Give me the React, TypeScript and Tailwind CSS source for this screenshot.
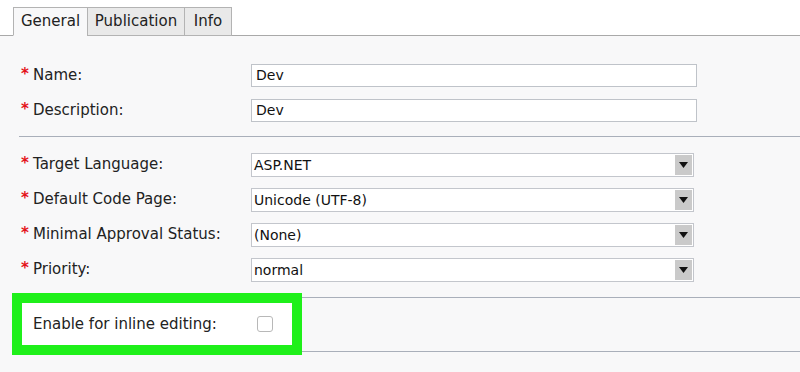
import React from 'react';

const font = "font-['DejaVu_Sans','Verdana',sans-serif]";

function Label({ text, required }: { text: string; required?: boolean }) {
  return (
    <div className="w-[232px] flex items-center pl-[2px] text-[15px] text-[#222]">
      <span className="w-[12px] text-[15px] font-bold text-[#e4121a] leading-none -mt-[2px]">
        {required ? '*' : ''}
      </span>
      <span>{text}</span>
    </div>
  );
}

function TextInput({ value }: { value: string }) {
  return (
    <div className="w-[446px] h-[23px] bg-white border border-[#bfc3c9] flex items-center pl-[4px] text-[14px] text-[#111]">
      {value}
    </div>
  );
}

function Select({ value }: { value: string }) {
  return (
    <div className="w-[443px] h-[24px] bg-white border border-[#c3c6cc] flex items-stretch text-[14px] text-[#111]">
      <div className="flex-1 flex items-center pl-[2px] pt-[2px]">{value}</div>
      <div className="w-[17px] bg-[#cacaca] flex items-center justify-center my-[1px] mr-[1px]">
        <svg width="9" height="6" viewBox="0 0 9 6">
          <path d="M0 0 L9 0 L4.5 6 Z" fill="#111" />
        </svg>
      </div>
    </div>
  );
}

function Row({ label, required, children }: { label: string; required?: boolean; children: React.ReactNode }) {
  return (
    <div className="h-[35px] flex items-center">
      <Label text={label} required={required} />
      {children}
    </div>
  );
}

export default function App() {
  const tabs = [
    { name: 'General', w: 'w-[75px]', active: true },
    { name: 'Publication', w: 'w-[98px]', active: false },
    { name: 'Info', w: 'w-[48px]', active: false },
  ];

  return (
    <div className={`w-[800px] h-[372px] bg-[#f8f8f9] overflow-hidden ${font}`}>
      {/* tab strip */}
      <div className="h-[36px] bg-white border-b border-[#a9a9a9] flex items-end pl-[13px]">
        {tabs.map((t, i) => (
          <div
            key={t.name}
            className={`${t.w} h-[29px] -mb-px flex items-center justify-center text-[15px] text-[#222] border border-[#b3b3b3] ${
              i > 0 ? '-ml-px' : ''
            } ${t.active ? 'bg-[#f8f8f9] border-b-[#f8f8f9]' : 'bg-[#e9e9e9]'}`}
          >
            {t.name}
          </div>
        ))}
      </div>

      <div className="pl-[19px]">
        <div className="pt-[22px] pb-[8px]">
          <Row label="Name:" required>
            <TextInput value="Dev" />
          </Row>
          <Row label="Description:" required>
            <TextInput value="Dev" />
          </Row>
        </div>

        <div className="border-t border-[#a9afba] pt-[10px] pb-[10px]">
          <Row label="Target Language:" required>
            <Select value="ASP.NET" />
          </Row>
          <Row label="Default Code Page:" required>
            <Select value="Unicode (UTF-8)" />
          </Row>
          <Row label="Minimal Approval Status:" required>
            <Select value="(None)" />
          </Row>
          <Row label="Priority:" required>
            <Select value="normal" />
          </Row>
        </div>

        <div className="relative h-[55px] border-t border-b border-[#a9afba]">
          {/* highlight box */}
          <div className="absolute left-[-7px] top-[-5px] w-[290px] h-[62px] border-[10px] border-[#1ff01a] bg-white flex items-center">
            <div className="w-[235px] pl-[11px] text-[15px] text-[#222]">Enable for inline editing:</div>
            <div className="w-[16px] h-[16px] rounded-[3px] border border-[#b8b8b8] bg-white" />
          </div>
        </div>
      </div>
    </div>
  );
}
